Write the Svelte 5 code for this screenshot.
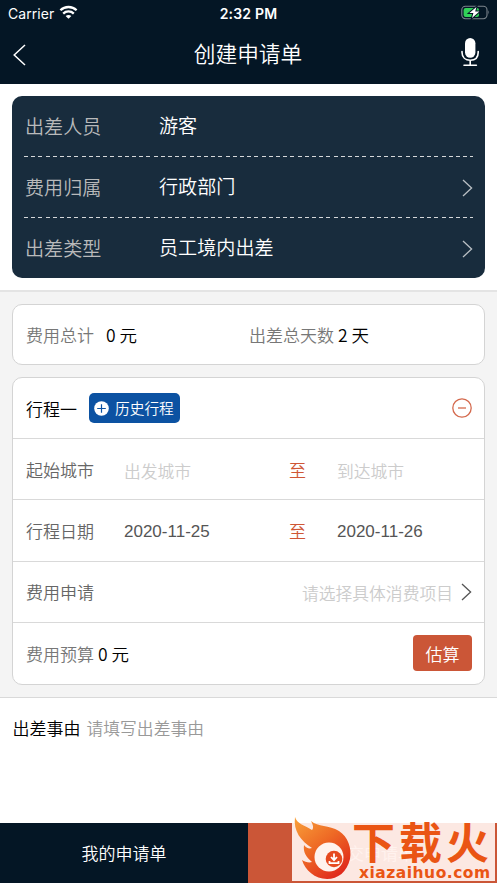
<script>
	let info = [
		{ label: '出差人员', value: '游客', arrow: false },
		{ label: '费用归属', value: '行政部门', arrow: true },
		{ label: '出差类型', value: '员工境内出差', arrow: true }
	];

	let trip = {
		title: '行程一',
		from: '',
		to: '',
		start: '2020-11-25',
		end: '2020-11-26',
		budget: 0
	};

	let total = 0;
	let days = 2;
	let reason = '';
</script>

<div class="page">
	<header>
		<div class="status">
			<div class="carrier">
				<span>Carrier</span>
				<svg class="wifi" width="19" height="14" viewBox="0 0 19 14">
					<path d="M1.4 5.3 A11.6 11.6 0 0 1 17.6 5.3" />
					<path d="M4.2 8.6 A7.6 7.6 0 0 1 14.8 8.6" />
					<path class="dot" d="M6.6 11 Q9.5 8.8 12.4 11 L9.5 13.8 Z" />
				</svg>
			</div>
			<div class="time">2:32 PM</div>
			<svg class="battery" width="30" height="15" viewBox="0 0 30 15">
				<rect class="shell" x="0.8" y="1.3" width="25.2" height="12.4" rx="3.6" />
				<path class="cap" d="M27.4 5.2 Q29.2 7.4 27.4 9.6 Z" />
				<rect class="level" x="2.6" y="3" width="15.4" height="9" rx="2" />
				<path class="bolt" d="M15.4 2 L8.4 8.1 H12.4 L11 13 L18.4 6.6 H14.2 Z" />
			</svg>
		</div>
		<nav>
			<svg class="back" width="14" height="22" viewBox="0 0 14 22">
				<path d="M12 1 L1.2 11 L12 21" />
			</svg>
			<h1>创建申请单</h1>
			<svg class="mic" width="18" height="29" viewBox="0 0 18 29">
				<rect x="4" y="0" width="10.4" height="19.8" rx="5.2" />
				<path d="M1 13.6 V14.2 C1 19.6 4.6 22.3 9.2 22.3 C13.8 22.3 17.2 19.6 17.2 14.2 V13.6 M9.2 22.3 V27 M3 27.2 H15.4" />
			</svg>
		</nav>
	</header>

	<section class="info">
		{#each info as row}
			<div class="info-row">
				<span class="info-label">{row.label}</span>
				<span class="info-value">{row.value}</span>
				{#if row.arrow}
					<svg class="arrow" width="11" height="18" viewBox="0 0 11 18">
						<path d="M1 1 L9.6 9 L1 17" />
					</svg>
				{/if}
			</div>
		{/each}
	</section>

	<main>
		<div class="card summary">
			<div class="total"><span class="label">费用总计</span><b>{total} 元</b></div>
			<div class="days"><span class="label">出差总天数</span><b>{days} 天</b></div>
		</div>

		<div class="card">
			<div class="row">
				<span class="trip-title">{trip.title}</span>
				<button class="history">
					<svg width="15" height="15" viewBox="0 0 15 15">
						<circle cx="7.5" cy="7.5" r="7.3" />
						<path d="M7.5 3.2 V11.8 M3.2 7.5 H11.8" />
					</svg>
					<span>历史行程</span>
				</button>
				<svg class="remove" width="20" height="20" viewBox="0 0 20 20">
					<circle cx="10" cy="10" r="9.2" />
					<path d="M6 10 H14" />
				</svg>
			</div>
			<div class="row">
				<span class="field">起始城市</span>
				<span class="from hint">{trip.from || '出发城市'}</span>
				<span class="sep">至</span>
				<span class="hint">{trip.to || '到达城市'}</span>
			</div>
			<div class="row">
				<span class="field">行程日期</span>
				<span class="from date">{trip.start}</span>
				<span class="sep">至</span>
				<span class="date">{trip.end}</span>
			</div>
			<div class="row">
				<span class="field">费用申请</span>
				<span class="hint items">请选择具体消费项目</span>
				<svg class="arrow dark" width="11" height="18" viewBox="0 0 11 18">
					<path d="M1 1 L9.6 9 L1 17" />
				</svg>
			</div>
			<div class="row">
				<span class="label">费用预算</span>
				<b class="budget">{trip.budget} 元</b>
				<button class="estimate">估算</button>
			</div>
		</div>
	</main>

	<section class="reason">
		<span>出差事由</span>
		<span class="reason-hint">{reason || '请填写出差事由'}</span>
	</section>

	<footer>
		<div class="mine">我的申请单</div>
		<div class="submit">提交申请单</div>

		<div class="mark">
			<svg class="flame" width="60" height="64" viewBox="0 0 60 64">
				<defs>
					<linearGradient id="fire" x1="0" y1="0" x2="0.7" y2="1">
						<stop offset="0" stop-color="#f9a13a" />
						<stop offset="0.5" stop-color="#ee6a25" />
						<stop offset="1" stop-color="#e02a1c" />
					</linearGradient>
				</defs>
				<path fill="url(#fire)" d="M3 0 C5 7 12 8 20 13 C22 11 21 8 19 4 C26 10 37 8 47 14 C56 20 60 31 58 42 C55 55 46 62 35 62 C23 62 13 53 10 43 C13 45 17 46 20 45 C14 40 11 35 12 28 C14 31 17 32 20 31 C9 24 1 14 3 0 Z" />
				<circle cx="37" cy="40" r="14.5" fill="#fff3ee" />
				<circle cx="42" cy="42" r="8.3" fill="#e64a20" />
				<path class="down" d="M42 36.5 V42.5 M39 40 L42 43.2 L45 40 M37.5 44 V46.2 H46.5 V44" />
			</svg>
			<div class="mark-text">
				<div class="mark-name">下载火</div>
				<div class="mark-site">xiazaihuo.com</div>
			</div>
		</div>
	</footer>
</div>

<style>
	:global(body) {
		background: #fff;
	}

	.page {
		width: 497px;
		height: 883px;
		display: flex;
		flex-direction: column;
		overflow: hidden;
		background: #fff;
		color: #111;
		font-family: "Liberation Sans", "Noto Sans CJK SC", sans-serif;
		font-size: 17px;
		font-weight: 350;
	}

	svg {
		display: block;
		flex: none;
		fill: none;
	}

	b {
		font-weight: 350;
		font-family: "Noto Sans CJK SC", sans-serif;
		font-size: 17.5px;
		color: #000;
	}

	header {
		height: 84px;
		box-sizing: border-box;
		background: #041625;
		color: #fff;
	}

	.status {
		height: 26px;
		display: grid;
		grid-template-columns: 1fr auto 1fr;
		align-items: center;
		padding: 0 8px 0 8px;
		font-family: Inter, sans-serif;
		font-size: 14px;
		font-weight: 400;
	}

	.carrier {
		display: flex;
		align-items: center;
		gap: 5px;
		letter-spacing: 0.05px;
	}

	.wifi {
		margin-top: -2px;
	}

	.wifi path {
		stroke: #fff;
		stroke-width: 2.3;
	}

	.wifi .dot {
		fill: #fff;
		stroke: none;
	}

	.time {
		font-weight: 600;
		letter-spacing: 0.2px;
	}

	.battery {
		justify-self: end;
		margin: -1px -2px 0 0;
	}

	.shell {
		stroke: #7c858d;
		stroke-width: 1.1;
	}

	.cap {
		fill: #7c858d;
	}

	.level {
		fill: #32d158;
	}

	.bolt {
		fill: #fff;
		stroke: #041625;
		stroke-width: 2;
		paint-order: stroke;
	}

	nav {
		height: 58px;
		display: grid;
		grid-template-columns: 1fr auto 1fr;
		align-items: center;
		padding: 0 18px 0 13px;
	}

	h1 {
		margin: 0;
		font-size: 21.7px;
		font-weight: 350;
		line-height: 30px;
		padding: 0 0 1px 4px;
	}

	.back path {
		stroke: #fff;
		stroke-width: 1.5;
	}

	.back {
		margin-top: -1px;
	}

	.mic {
		justify-self: end;
		margin-top: -5px;
	}

	.mic rect {
		fill: #fff;
	}

	.mic path {
		stroke: #fff;
		stroke-width: 1.6;
		stroke-linecap: round;
	}

	.info {
		height: 182px;
		box-sizing: border-box;
		flex: none;
		margin: 12px 12px;
		padding: 0 12px;
		border-radius: 10px;
		background: #182c3d;
		color: #fff;
		font-size: 19.1px;
	}

	.info-row {
		height: 61px;
		box-sizing: border-box;
		display: flex;
		align-items: center;
	}

	.info-row:not(:last-child) {
		background: repeating-linear-gradient(90deg, #d5d8da 0 4px, transparent 4px 7.2px) 0 100% / 100% 1.5px no-repeat;
	}

	.info-label {
		width: 135px;
		padding: 0 0 1px 1px;
		box-sizing: border-box;
		color: #b9babb;
	}

	.info-value {
		flex: 1;
		padding-bottom: 3px;
	}

	.arrow path {
		stroke: #b9bfc4;
		stroke-width: 1.3;
	}

	.dark path {
		stroke: #555;
	}

	main {
		height: 408px;
		box-sizing: border-box;
		flex: none;
		display: flex;
		flex-direction: column;
		gap: 12px;
		padding: 12px 12px;
		border-top: 2px solid #e4e4e4;
		border-bottom: 1px solid #d9d9d9;
		background: #f4f4f4;
	}

	.card {
		border: 1px solid #d4d4d4;
		border-radius: 10px;
		background: #fff;
	}

	.summary {
		height: 62px;
		box-sizing: border-box;
		display: flex;
		align-items: center;
		padding-left: 13px;
	}

	.total {
		width: 223px;
	}

	.total b {
		margin-left: 12px;
	}

	.days b {
		margin-left: 4px;
	}

	.label {
		color: #777;
	}

	.row {
		height: 61.2px;
		box-sizing: border-box;
		display: flex;
		align-items: center;
		padding: 0 12px 0 13px;
		border-bottom: 1px solid #d9d9d9;
	}

	.row:last-child {
		border-bottom: none;
	}

	.trip-title {
		width: 63px;
		color: #000;
	}

	button {
		border: none;
		color: #fff;
		font-family: inherit;
		font-weight: 350;
	}

	.history {
		width: 91px;
		height: 30px;
		display: flex;
		align-items: center;
		gap: 6px;
		padding: 0 0 0 5px;
		border-radius: 5px;
		background: #0c52a2;
		font-size: 14.7px;
		white-space: nowrap;
	}

	.history span {
		padding-bottom: 1px;
	}

	.history circle {
		fill: #fff;
	}

	.history path {
		stroke: #0c52a2;
		stroke-width: 1.2;
	}

	.remove {
		margin-left: auto;
	}

	.remove circle,
	.remove path {
		stroke: #d4694d;
		stroke-width: 1.3;
	}

	.field {
		width: 98px;
		color: #666;
	}

	.from {
		width: 165px;
	}

	.hint {
		color: #ccc;
		font-size: 16.8px;
		padding-top: 3px;
	}

	.date {
		padding-top: 3px;
		color: #555;
		font-size: 17px;
	}

	.sep {
		width: 48px;
		color: #cf5635;
	}

	.items {
		margin-left: auto;
		margin-right: 8px;
	}

	.budget {
		margin-left: 4px;
	}

	.estimate {
		width: 59px;
		height: 36px;
		margin-left: auto;
		padding: 0;
		border-radius: 4px;
		background: #cb5637;
		font-size: 17px;
	}

	.reason {
		flex: 1;
		display: flex;
		gap: 6px;
		padding: 17px 12.5px;
		color: #000;
	}

	.reason-hint {
		padding-top: 1px;
		color: #999;
		font-size: 16.8px;
	}

	footer {
		position: relative;
		height: 60px;
		flex: none;
		display: flex;
		color: #fff;
	}

	.mine,
	.submit {
		display: flex;
		align-items: center;
		justify-content: center;
		padding-bottom: 2px;
		box-sizing: border-box;
	}

	.mine {
		width: 248px;
		background: #041625;
	}

	.submit {
		flex: 1;
		background: #cb5637;
	}

	/* download site stamp over the submit button */
	.mark {
		position: absolute;
		left: 292px;
		top: 0;
		width: 203px;
		height: 58px;
		display: flex;
		align-items: flex-end;
		background: rgba(255, 241, 237, 0.94);
		color: #ea5514;
	}

	.flame {
		flex: none;
	}

	.down {
		stroke: #fff;
		stroke-width: 1.8;
	}

	.mark-text {
		height: 58px;
		white-space: nowrap;
	}

	.mark-name {
		height: 43px;
		line-height: 43px;
		font-size: 43px;
		font-weight: 700;
		letter-spacing: 4px;
	}

	.mark-site {
		margin-left: 7px;
		line-height: 14px;
		font-family: "DejaVu Sans", sans-serif;
		font-size: 15.5px;
		font-weight: bold;
		letter-spacing: 0.5px;
	}
</style>
